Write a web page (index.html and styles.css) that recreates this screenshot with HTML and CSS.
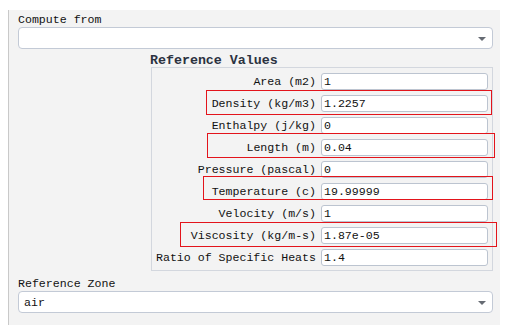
FILE: index.html
```html
<!DOCTYPE html>
<html lang="en">
<head>
  <meta charset="UTF-8" />
  <title>Reference Values</title>
  <link rel="stylesheet" href="styles.css">
</head>
<body>
  <div class="panel">
    <div class="field-label">Compute from</div>
    <div class="select">
      <span class="select-value"></span>
      <span class="caret"></span>
    </div>

    <div class="group">
      <div class="group-title">Reference Values</div>
      <div class="group-box">
        <div class="row"><span class="row-label">Area (m2)</span><input class="row-input" value="1" readonly></div>
        <div class="row"><span class="row-label">Density (kg/m3)</span><input class="row-input" value="1.2257" readonly></div>
        <div class="row"><span class="row-label">Enthalpy (j/kg)</span><input class="row-input" value="0" readonly></div>
        <div class="row"><span class="row-label">Length (m)</span><input class="row-input" value="0.04" readonly></div>
        <div class="row"><span class="row-label">Pressure (pascal)</span><input class="row-input" value="0" readonly></div>
        <div class="row"><span class="row-label">Temperature (c)</span><input class="row-input" value="19.99999" readonly></div>
        <div class="row"><span class="row-label">Velocity (m/s)</span><input class="row-input" value="1" readonly></div>
        <div class="row"><span class="row-label">Viscosity (kg/m-s)</span><input class="row-input" value="1.87e-05" readonly></div>
        <div class="row"><span class="row-label">Ratio of Specific Heats</span><input class="row-input" value="1.4" readonly></div>

        <!-- highlight marks drawn over the rows -->
        <div class="mark mark-density"></div>
        <div class="mark mark-length"></div>
        <div class="mark mark-temperature"></div>
        <div class="mark mark-viscosity"></div>
      </div>
    </div>

    <div class="field-label zone-label">Reference Zone</div>
    <div class="select">
      <span class="select-value">air</span>
      <span class="caret"></span>
    </div>
  </div>
</body>
</html>
```

FILE: styles.css
```css
* {
  box-sizing: border-box;
  margin: 0;
  padding: 0;
}

body {
  background: #ffffff;
  font-family: "Liberation Mono", "DejaVu Sans Mono", monospace;
  font-size: 11.6px;
  color: #111;
}

.panel {
  margin: 10px 0 0 8px;
  width: 492px;
  height: 315px;
  background: #f3f3f3;
  border-left: 1px solid #c9c9c9;
  padding: 2px 7px 0 9px;
}

.field-label {
  height: 15px;
  line-height: 15px;
}

.select {
  display: flex;
  align-items: center;
  justify-content: space-between;
  height: 22px;
  background: #fff;
  border: 1px solid #c3cad6;
  border-radius: 4px;
  padding: 0 6px 0 5px;
}

.caret {
  width: 0;
  height: 0;
  border-left: 4.5px solid transparent;
  border-right: 4.5px solid transparent;
  border-top: 4px solid #666b73;
  margin-top: 1px;
}

/* Reference values group */
.group {
  margin: 5px 0 0 132px;
  width: 343px;
}

.group-title {
  height: 13px;
  line-height: 13px;
  font-size: 13.3px;
  font-weight: bold;
  color: #2b3240;
}

.group-box {
  position: relative;
  margin-left: 1px;
  border: 1px solid #d3d7de;
  padding: 5px 4px 4px 0;
  display: flex;
  flex-direction: column;
  gap: 5px;
}

.row {
  display: grid;
  grid-template-columns: 1fr 167px;
  column-gap: 5px;
  align-items: center;
}

.row-label {
  text-align: right;
  white-space: nowrap;
}

.row-input {
  height: 17px;
  font: inherit;
  color: #111;
  background: #fff;
  border: 1px solid #bcc4d0;
  border-radius: 3px;
  padding: 0 2px;
  outline: none;
}

.mark {
  position: absolute;
  border: 1px solid #e3141b;
}

.mark-density {
  left: 54px;
  top: 22px;
  width: 286px;
  height: 25px;
}

.mark-length {
  left: 55px;
  top: 65px;
  width: 288px;
  height: 25px;
}

.mark-temperature {
  left: 51px;
  top: 108px;
  width: 290px;
  height: 24px;
}

.mark-viscosity {
  left: 28px;
  top: 154px;
  width: 317px;
  height: 25px;
}

.zone-label {
  margin-top: 5px;
}
```
